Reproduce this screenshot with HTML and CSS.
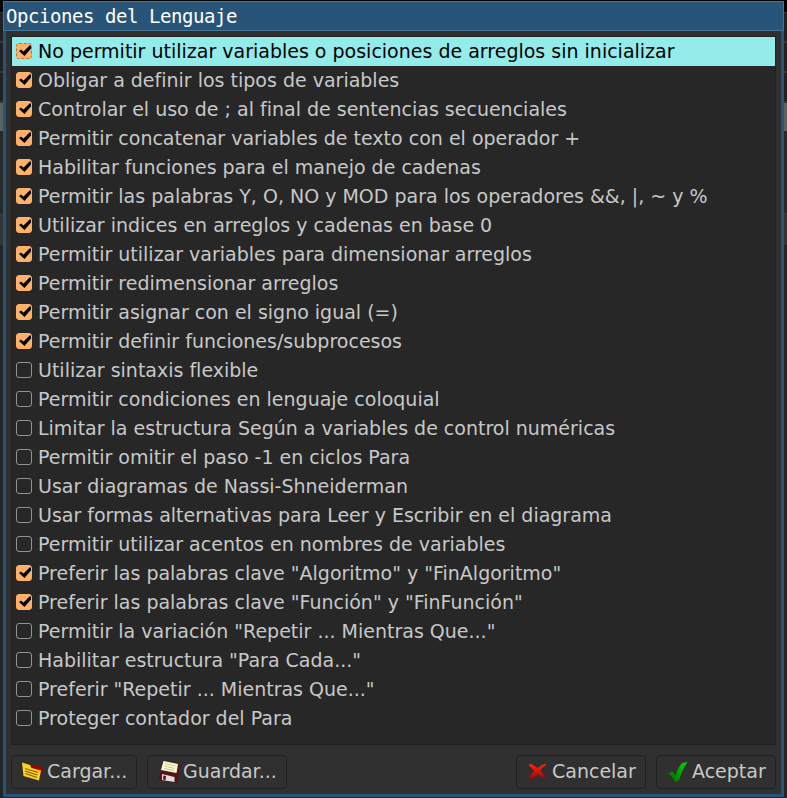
FILE: index.html
```
<!DOCTYPE html>
<html lang="es">
<head>
<meta charset="utf-8">
<title>Opciones del Lenguaje</title>
<link rel="stylesheet" href="styles.css">
</head>
<body>
<main class="window">
<header class="titlebar">Opciones del Lenguaje</header>
<section class="content">
<ul class="options" id="options"></ul>
<footer class="actions">
<button class="button load"><svg class="icon" width="24" height="24" viewBox="0 0 24 24"><path d="M9.500 6l5 .5 8 2-3 8-10-6z" fill="#a60000"/><path d="M1 3.500l8 2.500 1.500 3 9.500 2.500-2 10L2.500 17z" fill="#ffd21f"/><path d="M4 9.500l13 4M4 12l12.500 4M4.500 14.500l11.500 4" stroke="#796000" stroke-width="1.200"/></svg>Cargar...</button>
<button class="button save"><svg class="icon" width="24" height="26" viewBox="0 0 24 26"><path d="M6 3l16.500 3L21 25 1 22z" fill="#541519"/><path d="M6.500 3l14.500 3-1.500 9L4 12z" fill="#fffbd3"/><path d="M8 5.500l10.500 2.500M7.500 8l10 2.500M7 10.500l10 2" stroke="#c5c998"/><path d="M5 16l12.500 3v5L5 22z" fill="#e4dadd"/><path d="M6.500 17.500l2.500.5-.5 4-2.500-.5z" fill="#41151a"/></svg>Guardar...</button>
<button class="button cancel"><svg class="icon" width="20" height="20" viewBox="0 0 20 20"><defs><linearGradient id="red" x2="0" y2="1"><stop stop-color="#ff2515"/><stop offset="1" stop-color="#a80000"/></linearGradient></defs><path d="M2 2.500Q6 4 9.500 7 13 4 17 2.500l1 1.500q-4 2.500-5.500 6 3 3 5 6l-2 1.500q-3-2-5.500-4.500-3 3-6.500 5.500L1 17q2-4 5.500-7Q3.500 7 1 4.500z" fill="url(#red)"/></svg>Cancelar</button>
<button class="button accept"><svg class="icon" width="21" height="24" viewBox="0 0 21 24"><defs><linearGradient id="green" x1="1" x2="0" y2="1"><stop stop-color="#00db00"/><stop offset="1" stop-color="#006300"/></linearGradient></defs><path d="M0 14.500l4-2q2 1 3.500 4.500Q10 8 14 4l5.500-1q-6 9-8.500 18.500L7 23q-2-5-7-8.500z" fill="url(#green)"/></svg>Aceptar</button>
</footer>
</section>
</main>
<script src="options.js"></script>
</body>
</html>
```

FILE: styles.css
```
* { box-sizing: border-box; }
body {
  margin: 0;
  width: 787px;
  height: 798px;
  overflow: hidden;
  padding: 1px 3px;
  background: linear-gradient(#000 0 12px, #343637 12px 13px, #202122 13px 41px, #343637 41px 43px, #202122 43px 71px, #343637 71px 73px, #202122 73px 101px, #343637 101px 103px, #5a6264 103px 131px, #292929 131px 213px, #343434 213px 245px, #242526 245px);
}
.window { width: 781px; height: 796px; background: #303030; }
.titlebar {
  height: 30px;
  padding-left: 2px;
  border: 1px solid #477497;
  background: #285577;
  color: #fff;
  font: 19px/29px "DejaVu Sans Mono", monospace;
  letter-spacing: -0.44px;
}
.content {
  height: 766px;
  padding: 5px 5px 5px;
  border: solid #285577;
  border-width: 0 3px 3px;
  font: 19px/29px "DejaVu Sans", sans-serif;
}
.options {
  height: 709px;
  margin: 0;
  padding: 0;
  border: 1px solid #202020;
  background: #272727;
  color: #c8c8c8;
  list-style: none;
}
.option { display: flex; align-items: center; height: 29px; padding-left: 4px; gap: 6px; white-space: nowrap; }
.option.selected { background: #93ecea; color: #000; }
.box { width: 16px; height: 16px; flex: none; margin-bottom: 1px; border: 1px solid #929292; border-radius: 3px; }
.box.checked { border-color: #ffb267; background: #ffb267; }
.selected .box { border: 1px dashed #af7b49; }
.tick { display: block; width: 14px; height: 14px; }
.actions { display: flex; gap: 10px; margin-top: 10px; }
.button {
  display: flex;
  align-items: center;
  height: 34px;
  padding: 0 0 2px 9px;
  border: 1px solid #202020;
  border-radius: 4px;
  background: #303030;
  color: #c8c8c8;
  font: inherit;
  white-space: nowrap;
}
.icon { flex: none; }
.load { width: 126px; gap: 2px; }
.save { width: 140px; gap: 2px; }
.cancel { width: 130px; margin-left: auto; padding-left: 11px; gap: 4px; }
.accept { width: 120px; padding-left: 11px; gap: 3px; }
```

FILE: options.js
```
const options = [
  [1, 'No permitir utilizar variables o posiciones de arreglos sin inicializar'],
  [1, 'Obligar a definir los tipos de variables'],
  [1, 'Controlar el uso de ; al final de sentencias secuenciales'],
  [1, 'Permitir concatenar variables de texto con el operador +'],
  [1, 'Habilitar funciones para el manejo de cadenas'],
  [1, 'Permitir las palabras Y, O, NO y MOD para los operadores &&, |, ~ y %'],
  [1, 'Utilizar indices en arreglos y cadenas en base 0'],
  [1, 'Permitir utilizar variables para dimensionar arreglos'],
  [1, 'Permitir redimensionar arreglos'],
  [1, 'Permitir asignar con el signo igual (=)'],
  [1, 'Permitir definir funciones/subprocesos'],
  [0, 'Utilizar sintaxis flexible'],
  [0, 'Permitir condiciones en lenguaje coloquial'],
  [0, 'Limitar la estructura Según a variables de control numéricas'],
  [0, 'Permitir omitir el paso -1 en ciclos Para'],
  [0, 'Usar diagramas de Nassi-Shneiderman'],
  [0, 'Usar formas alternativas para Leer y Escribir en el diagrama'],
  [0, 'Permitir utilizar acentos en nombres de variables'],
  [1, 'Preferir las palabras clave "Algoritmo" y "FinAlgoritmo"'],
  [1, 'Preferir las palabras clave "Función" y "FinFunción"'],
  [0, 'Permitir la variación "Repetir ... Mientras Que..."'],
  [0, 'Habilitar estructura "Para Cada..."'],
  [0, 'Preferir "Repetir ... Mientras Que..."'],
  [0, 'Proteger contador del Para']
];
const tick = '<svg class="tick" viewBox="0 0 14 14"><path d="M2 7l2-1.500L6.500 7.500 12.500 1.500H14v3L7.500 12z" fill="#000"/></svg>';
document.getElementById('options').innerHTML = options.map(([checked, label], i) =>
  `<li class="option${i ? '' : ' selected'}"><span class="box${checked ? ' checked' : ''}">${checked ? tick : ''}</span><span>${label.replace(/&/g, '&amp;')}</span></li>`
).join('');
```
